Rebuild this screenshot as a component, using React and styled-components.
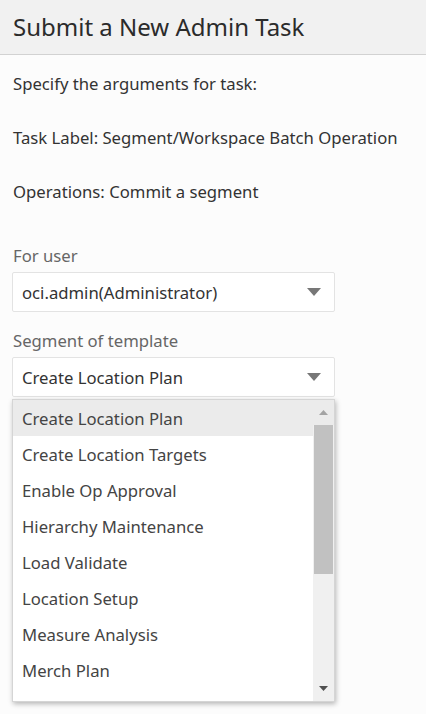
import React from "react";
import styled, { createGlobalStyle } from "styled-components";

const GlobalStyle = createGlobalStyle`
  html, body {
    margin: 0;
    padding: 0;
    background: #fcfcfc;
  }
  body {
    font-family: "Noto Sans", "Open Sans", sans-serif;
    color: #333333;
  }
`;

const segments = [
  "Create Location Plan",
  "Create Location Targets",
  "Enable Op Approval",
  "Hierarchy Maintenance",
  "Load Validate",
  "Location Setup",
  "Measure Analysis",
  "Merch Plan",
  "Merch Targets",
];

function Caret({ color = "#777" }) {
  return (
    <svg width="14" height="8" viewBox="0 0 14 8">
      <polygon points="0,0 14,0 7,8" fill={color} />
    </svg>
  );
}

function CaretUp({ color }) {
  return (
    <svg width="9" height="5" viewBox="0 0 9 5">
      <polygon points="0,5 9,5 4.5,0" fill={color} />
    </svg>
  );
}

function CaretDown({ color }) {
  return (
    <svg width="9" height="5" viewBox="0 0 9 5">
      <polygon points="0,0 9,0 4.5,5" fill={color} />
    </svg>
  );
}

function App() {
  return (
    <Page>
      <GlobalStyle />
      <Header>
        <Title>Submit a New Admin Task</Title>
      </Header>
      <Body>
        <Info>
          <Line>Specify the arguments for task:</Line>
          <Line>Task Label: Segment/Workspace Batch Operation</Line>
          <Line>Operations: Commit a segment</Line>
        </Info>
        <Form>
          <Field>
            <Label>For user</Label>
            <Select>
              <Value>oci.admin(Administrator)</Value>
              <Caret />
            </Select>
          </Field>
          <Field>
            <Label>Segment of template</Label>
            <Anchor>
              <Select>
                <Value>Create Location Plan</Value>
                <Caret />
              </Select>
              <Popup>
                <Options>
                  {segments.map((s, i) => (
                    <Option key={s} $active={i === 0}>
                      {s}
                    </Option>
                  ))}
                </Options>
                <Scrollbar>
                  <ScrollButton $top>
                    <CaretUp color="#a3a3a3" />
                  </ScrollButton>
                  <Thumb />
                  <Track />
                  <ScrollButton>
                    <CaretDown color="#505050" />
                  </ScrollButton>
                </Scrollbar>
              </Popup>
            </Anchor>
          </Field>
        </Form>
      </Body>
    </Page>
  );
}

const Page = styled.div`
  width: 426px;
  height: 714px;
  overflow: hidden;
  display: flex;
  flex-direction: column;
`;

const Header = styled.header`
  height: 54px;
  background: #f1f1f1;
  border-bottom: 1px solid #d2d2d2;
  display: flex;
  align-items: center;
  padding: 0 13px;
`;

const Title = styled.h1`
  margin: 0;
  font-size: 24px;
  font-weight: 400;
  color: #2b2b2b;
  margin-top: -2px;
`;

const Body = styled.div`
  padding: 17px 12px 0 13px;
  display: flex;
  flex-direction: column;
`;

const Info = styled.div`
  display: flex;
  flex-direction: column;
  gap: 30px;
`;

const Line = styled.p`
  margin: 0;
  font-size: 16.7px;
  line-height: 24px;
  color: #333;
`;

const Form = styled.div`
  margin-top: 40px;
  width: 323px;
  display: flex;
  flex-direction: column;
  gap: 17px;
  margin-left: -1px;
`;

const Field = styled.div`
  display: flex;
  flex-direction: column;
  gap: 4px;
`;

const Label = styled.label`
  font-size: 16.7px;
  line-height: 24px;
  color: #666;
  padding-left: 1px;
`;

const Anchor = styled.div`
  position: relative;
`;

const Select = styled.div`
  height: 40px;
  box-sizing: border-box;
  border: 1px solid #e3e3e3;
  border-radius: 2px;
  background: #fff;
  display: flex;
  align-items: center;
  justify-content: space-between;
  padding: 0 13px 0 9px;
`;

const Value = styled.span`
  font-size: 16.7px;
  color: #333;
`;

const Popup = styled.div`
  position: absolute;
  top: 42px;
  left: 0;
  width: 323px;
  height: 303px;
  box-sizing: border-box;
  background: #fff;
  border: 1px solid #d5d5d5;
  box-shadow: 1px 2px 5px rgba(0, 0, 0, 0.28);
  display: flex;
  overflow: hidden;
`;

const Options = styled.ul`
  list-style: none;
  margin: 0;
  padding: 0;
  flex: 1;
  overflow: hidden;
`;

const Option = styled.li`
  height: 36px;
  flex-shrink: 0;
  display: flex;
  align-items: center;
  padding-left: 9px;
  font-size: 16.7px;
  color: #444;
  background: ${(p) => (p.$active ? "#ebebeb" : "transparent")};
`;

const Scrollbar = styled.div`
  width: 21px;
  background: #f0f0f0;
  display: flex;
  flex-direction: column;
`;

const ScrollButton = styled.div`
  height: 25px;
  display: flex;
  align-items: center;
  justify-content: center;
  background: ${(p) => (p.$top ? "#ebebeb" : "#f0f0f0")};
`;

const Thumb = styled.div`
  height: 149px;
  background: #c1c1c1;
  margin: 0 1px;
`;

const Track = styled.div`
  flex: 1;
`;

export default App;
